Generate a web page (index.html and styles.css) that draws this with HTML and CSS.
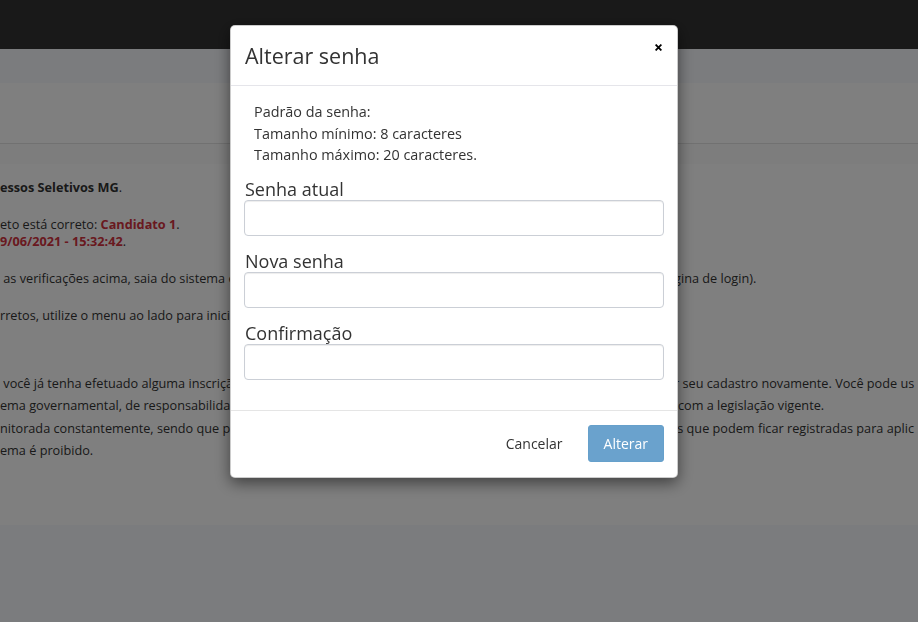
FILE: index.html
```html
<!DOCTYPE html>
<html lang="pt-BR">
<head>
<meta charset="utf-8">
<title>Alterar senha</title>
<link rel="stylesheet" href="styles.css">
</head>
<body>
<div class="page">
  <header class="navbar"></header>
  <div class="subbar"></div>
  <div class="titlebar"></div>
  <div class="crumbs"></div>
  <main class="content">
    <p class="ln"><span><b>essos Seletivos MG</b>.</span><span></span><span></span></p>
    <div class="para">
      <p class="ln"><span>eto está correto: <b class="red">Candidato 1</b>.</span><span></span><span></span></p>
      <p class="ln"><span><b class="red">9/06/2021 - 15:32:42</b>.</span><span></span><span></span></p>
    </div>
    <p class="ln"><span> as verificações acima, saia do sistema e</span><span></span><span>agina de login).</span></p>
    <p class="ln"><span>rretos, utilize o menu ao lado para inici</span><span></span><span></span></p>
    <div class="notes">
      <p class="ln"><span> você já tenha efetuado alguma inscriçã</span><span></span><span>ar seu cadastro novamente. Você pode us</span></p>
      <p class="ln"><span>ema governamental, de responsabilidad</span><span></span><span>o com a legislação vigente.</span></p>
      <p class="ln"><span>nitorada constantemente, sendo que pa</span><span></span><span>ais que podem ficar registradas para aplic</span></p>
      <p class="ln"><span>ema é proibido.</span><span></span><span></span></p>
    </div>
  </main>
  <div class="pagefoot"></div>
</div>

<div class="backdrop"></div>

<div class="modal" role="dialog">
  <div class="modal-header">
    <h4 class="modal-title">Alterar senha</h4>
    <button class="close" type="button" aria-label="Fechar">
      <svg width="7" height="7" viewBox="0 0 7 7"><path d="M1.2 1.2 L5.8 5.8 M5.8 1.2 L1.2 5.8" stroke="#000" stroke-width="1.8" stroke-linecap="square"/></svg>
    </button>
  </div>
  <div class="modal-body">
    <p class="rules">Padrão da senha:<br>Tamanho mínimo: 8 caracteres<br>Tamanho máximo: 20 caracteres.</p>
    <div class="form-group">
      <label for="atual">Senha atual</label>
      <input id="atual" type="password" class="form-control">
    </div>
    <div class="form-group">
      <label for="nova">Nova senha</label>
      <input id="nova" type="password" class="form-control">
    </div>
    <div class="form-group">
      <label for="conf">Confirmação</label>
      <input id="conf" type="password" class="form-control">
    </div>
  </div>
  <div class="modal-footer">
    <button class="btn btn-link" type="button">Cancelar</button>
    <button class="btn btn-primary" type="button">Alterar</button>
  </div>
</div>
</body>
</html>
```

FILE: styles.css
```css
html, body {
  margin: 0;
  padding: 0;
  height: 100%;
  overflow: hidden;
}
body {
  font-family: "Open Sans", "DejaVu Sans", sans-serif;
  color: #333;
  background: #f6f8fc;
}
.page {
  min-height: 100%;
}
.navbar {
  height: 49px;
  background: #333;
}
.subbar {
  height: 34px;
  background: #f6f8fc;
}
.titlebar {
  height: 60px;
  background: #fff;
  border-bottom: 1px solid #e2e2e2;
}
.crumbs {
  height: 20px;
  background: #fbfbfb;
}
.content {
  background: #fff;
  padding: 15px 0 18px;
  font-size: 12.7px;
}
.ln {
  display: grid;
  grid-template-columns: 230px 437px 1fr;
  margin: 0;
  line-height: 17px;
  white-space: pre;
}
p.ln, .para {
  margin: 0 0 20px;
}
.para .ln {
  margin: 0;
}
.notes {
  margin-top: 48px;
}
.notes .ln {
  margin: 0;
  line-height: 22.4px;
}
.red {
  color: #d3323e;
}
.pagefoot {
  height: 45px;
  background: #fff;
}

.backdrop {
  position: fixed;
  inset: 0;
  background: rgba(0, 0, 0, 0.5);
}

.modal {
  position: fixed;
  top: 25px;
  left: 230px;
  width: 448px;
  box-sizing: border-box;
  background: #fff;
  border: 1px solid rgba(0, 0, 0, 0.2);
  border-radius: 5px;
  box-shadow: 0 5px 15px rgba(0, 0, 0, 0.5);
}
.modal-header {
  position: relative;
  padding: 15px 14px;
  border-bottom: 1px solid #e5e5ea;
}
.modal-title {
  margin: 0;
  font-size: 21.5px;
  line-height: 29px;
  font-weight: 400;
  color: #333;
}
.close {
  position: absolute;
  top: 18px;
  right: 15px;
  width: 7px;
  height: 7px;
  padding: 0;
  border: 0;
  background: none;
  display: flex;
}
.modal-body {
  padding: 15px 13px;
}
.rules {
  margin: 0 0 13px;
  padding-left: 10px;
  font-size: 14.4px;
  line-height: 21.5px;
  color: #333;
}
.form-group {
  margin-bottom: 15px;
}
.form-group label {
  display: block;
  padding-left: 1px;
  font-size: 18px;
  line-height: 21px;
  color: #333;
}
.form-control {
  display: block;
  width: 100%;
  height: 36px;
  box-sizing: border-box;
  margin: 0;
  border: 1px solid #cbcfd6;
  border-radius: 4px;
  box-shadow: inset 0 1px 1px rgba(0, 0, 0, 0.075);
  background: #fff;
}
.modal-footer {
  display: flex;
  justify-content: flex-end;
  gap: 9px;
  padding: 14px 13px 15px;
  border-top: 1px solid #e5e5e5;
}
.btn {
  font-family: "Open Sans", "DejaVu Sans", sans-serif;
  font-size: 14px;
  line-height: 19px;
  padding: 8px 15px;
  border: 1px solid transparent;
  border-radius: 3px;
  margin: 0;
}
.btn-link {
  background: none;
  color: #333;
}
.btn-primary {
  background: #6aa2cd;
  border-color: #66a0cb;
  color: #fff;
}
```
